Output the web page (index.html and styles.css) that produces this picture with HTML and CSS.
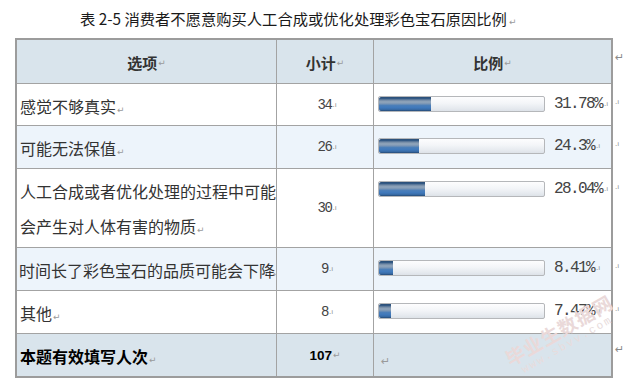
FILE: index.html
```html
<!DOCTYPE html>
<html lang="zh-CN">
<head>
<meta charset="utf-8">
<title>表 2-5</title>
<link rel="stylesheet" href="styles.css">
</head>
<body>
<div class="page">
  <h1 class="title">表 2-5 消费者不愿意购买人工合成或优化处理彩色宝石原因比例<span class="pm">↵</span></h1>
  <div class="wrap">
    <div class="tbl">
      <div class="cell head">选项<span class="pm">↵</span></div>
      <div class="cell head">小计<span class="pm">↵</span></div>
      <div class="cell head">比例<span class="pm">↵</span></div>

      <div class="cell label">感觉不够真实<span class="pm">↵</span></div>
      <div class="cell num">34<span class="tm">.ı</span></div>
      <div class="cell pct"><div class="track"><div class="fill" style="width:31.78%"></div></div><span class="pv">31.78%</span><span class="tm">.ı</span></div>

      <div class="cell label alt">可能无法保值<span class="pm">↵</span></div>
      <div class="cell num alt">26<span class="tm">.ı</span></div>
      <div class="cell pct alt"><div class="track"><div class="fill" style="width:24.3%"></div></div><span class="pv">24.3%</span><span class="tm">.ı</span></div>

      <div class="cell label">人工合成或者优化处理的过程中可能<br>会产生对人体有害的物质<span class="pm">↵</span></div>
      <div class="cell num">30<span class="tm">.ı</span></div>
      <div class="cell pct"><div class="track"><div class="fill" style="width:28.04%"></div></div><span class="pv">28.04%</span><span class="tm">.ı</span></div>

      <div class="cell label alt tight">时间长了彩色宝石的品质可能会下降<span class="pm">↵</span></div>
      <div class="cell num alt">9<span class="tm">.ı</span></div>
      <div class="cell pct alt"><div class="track"><div class="fill" style="width:8.41%"></div></div><span class="pv">8.41%</span><span class="tm">.ı</span></div>

      <div class="cell label">其他<span class="pm">↵</span></div>
      <div class="cell num">8<span class="tm">.ı</span></div>
      <div class="cell pct"><div class="track"><div class="fill" style="width:7.47%"></div></div><span class="pv">7.47%</span><span class="tm">.ı</span></div>

      <div class="cell label foot">本题有效填写人次<span class="pm">↵</span></div>
      <div class="cell num foot total">107<span class="pm">↵</span></div>
      <div class="cell foot empty"><span class="pm">↵</span></div>
    </div>
    <div class="marks">
      <span class="mk big">↵</span>
      <span class="mk">.ı</span>
      <span class="mk">.ı</span>
      <span class="mk">.ı</span>
      <span class="mk">.ı</span>
      <span class="mk">.ı</span>
      <span class="mk big foot-mk">↵</span>
    </div>
  </div>
  <div class="watermark">
    <div class="wm1">毕业生数据网</div>
    <div class="wm2">www.sbvv.com</div>
  </div>
</div>
</body>
</html>
```
FILE: styles.css
```css
* { box-sizing: border-box; }
html, body { margin: 0; padding: 0; background: #fff; }
body {
  font-family: "Noto Sans CJK SC", "DejaVu Sans", sans-serif;
  color: #333;
  width: 629px;
  height: 379px;
  overflow: hidden;
}
.page {
  position: relative;
  padding: 8px 0 0 15px;
}
.title {
  margin: 0 0 6px 0;
  padding-left: 65px;
  font-size: 15.3px;
  line-height: 20px;
  font-weight: normal;
  color: #1a1a1a;
  white-space: nowrap;
}
.title .pm { font-size: 9px; margin-left: 2px; }
.pm {
  color: #9a9a9a;
  font-size: 9px;
  font-family: "DejaVu Sans", sans-serif;
  font-weight: normal;
  margin-left: 1px;
}
.tm {
  color: #8a8a8a;
  font-size: 7px;
  font-family: "DejaVu Sans", sans-serif;
  margin-left: 1px;
  letter-spacing: 0;
}
.wrap {
  display: flex;
  align-items: flex-start;
}
.tbl {
  display: grid;
  grid-template-columns: 259px 96px 237px;
  grid-template-rows: 43px 41px 42px 78px 42px 42px 42px;
  gap: 1px;
  background: #a3a3a3;
  border: 2px solid #9c9c9c;
  width: 598px;
}
.cell {
  background: #fff;
  overflow: hidden;
  white-space: nowrap;
}
.cell.alt { background: #edf4fb; }
.cell.head, .cell.foot { background: #d9e4ec; }
.head {
  display: flex;
  align-items: center;
  justify-content: center;
  padding-top: 2px;
  font-size: 15px;
  font-weight: bold;
  color: #333;
}
.label {
  padding: 5px 0 0 3px;
  font-size: 16px;
  line-height: 35px;
  color: #333;
}
.label.tight { padding-left: 2px; }
.label.tight .pm { margin-left: -2px; font-size: 8px; }
.label.foot {
  font-weight: bold;
  color: #000;
}
.num {
  display: flex;
  align-items: center;
  justify-content: center;
  font-family: "Liberation Mono", monospace;
  font-size: 14px;
  letter-spacing: -1.4px;
  color: #444;
  padding-left: 4px;
}
.num.total {
  font-family: "Liberation Sans", sans-serif;
  font-weight: bold;
  font-size: 13.5px;
  letter-spacing: 0;
  color: #000;
  padding-left: 0;
}
.pct {
  display: flex;
  align-items: flex-start;
  padding: 12px 0 0 4px;
}
.track {
  width: 167px;
  height: 16px;
  border: 1px solid #b5b7ba;
  border-radius: 2px;
  background: linear-gradient(to bottom, #fdfdfe 0%, #f3f5f8 45%, #e6eaef 80%, #dde2e8 100%);
  overflow: hidden;
  flex: none;
}
.fill {
  height: 100%;
  border-radius: 2px 0 0 2px;
  background: linear-gradient(to bottom,
    #2c4f77 0%, #2f5682 10%, #7189a5 22%, #93a7bc 35%,
    #7b96b5 48%, #4c7fb9 60%, #4079bb 75%, #3a6eaa 88%, #244a76 100%);
}
.pv {
  margin-left: 9px;
  font-family: "Liberation Mono", monospace;
  font-size: 16px;
  letter-spacing: -1.6px;
  color: #444;
  line-height: 16px;
}
.pct .tm { line-height: 16px; margin-left: 2px; }
.empty {
  padding: 12px 0 0 6px;
}
.empty .pm { font-size: 11px; }
.marks {
  display: grid;
  grid-template-rows: 44px 42px 43px 79px 43px 43px 43px;
  padding: 2px 0 0 2px;
}
.mk {
  color: #8a8a8a;
  font-family: "DejaVu Sans", sans-serif;
  font-size: 7px;
  line-height: 8px;
  padding-top: 14px;
}
.mk.big {
  font-size: 11px;
  line-height: 12px;
  padding-top: 12px;
}
.mk.foot-mk { padding-top: 10px; }
.watermark {
  position: absolute;
  left: 502px;
  top: 318px;
  white-space: nowrap;
  transform: rotate(-30deg);
  transform-origin: center;
  color: #ead9d9;
  text-align: center;
  pointer-events: none;
}
.wm1 {
  font-size: 19px;
  font-weight: bold;
  letter-spacing: 1px;
  line-height: 22px;
}
.wm2 {
  font-family: "Liberation Mono", monospace;
  font-size: 11px;
  letter-spacing: 2px;
  line-height: 13px;
  color: #e8dcdc;
}
```
